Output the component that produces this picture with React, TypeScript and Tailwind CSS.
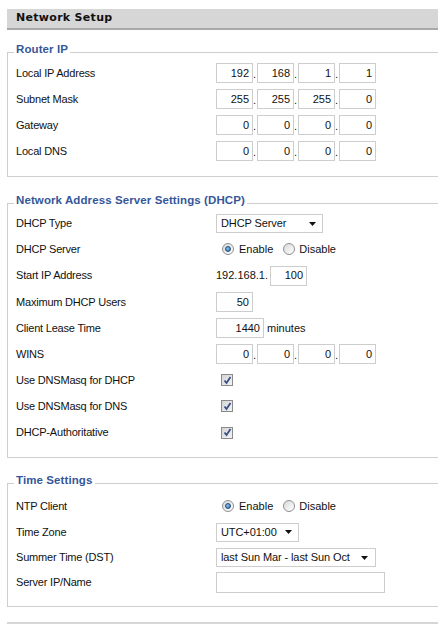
import React from "react";

const font = "font-['Liberation_Sans',Arial,sans-serif]";

function Header({ title }: { title: string }) {
  return (
    <div className="ml-[7px] flex h-[21px] items-center border-b-2 border-[#a9a9a9] bg-[#d6d6d6] pl-[9px]">
      <span className="font-['DejaVu_Sans',Verdana,sans-serif] text-[11px] font-bold tracking-[0.3px] text-[#111]">
        {title}
      </span>
    </div>
  );
}

function Fieldset({
  legend,
  children,
  className,
}: {
  legend: string;
  children: React.ReactNode;
  className?: string;
}) {
  return (
    <div className={`ml-[7px] border border-[#cfcfcf] ${className ?? ""}`}>
      <div className="-mt-[11px] ml-[6px] w-fit bg-white px-[2px] text-[11.5px] font-bold leading-[15px] tracking-[0.1px] text-[#35579a]">
        {legend}
      </div>
      {children}
    </div>
  );
}

function Row({
  label,
  children,
  h = "h-[26px]",
}: {
  label: string;
  children?: React.ReactNode;
  h?: string;
}) {
  return (
    <div className={`flex ${h} items-center`}>
      <div className="w-[208px] shrink-0 pl-[8px] text-[11px] tracking-[-0.2px] text-[#111]">{label}</div>
      <div className="flex items-center text-[11px] text-[#111]">{children}</div>
    </div>
  );
}

function Box({ value, w = "w-[37px]" }: { value: string; w?: string }) {
  return (
    <div
      className={`${w} flex h-[20px] items-center justify-end border border-[#cdcdcd] bg-white pr-[3px] text-[11px] text-[#111]`}
    >
      {value}
    </div>
  );
}

function IP({ parts }: { parts: string[] }) {
  return (
    <div className="flex items-center">
      {parts.map((p, i) => (
        <React.Fragment key={i}>
          <Box value={p} />
          {i < parts.length - 1 && (
            <span className="flex w-[4px] items-end justify-start self-end pb-[3px] text-[11px] leading-none">.</span>
          )}
        </React.Fragment>
      ))}
    </div>
  );
}

function Arrow() {
  return (
    <svg width="7" height="4" viewBox="0 0 7 4" className="shrink-0">
      <path d="M0 0 H7 L3.5 4 Z" fill="#111" />
    </svg>
  );
}

function Select({ value, w, pr }: { value: string; w: string; pr: string }) {
  return (
    <div
      className={`${w} flex h-[19px] items-center justify-between border border-[#cdcdcd] bg-white pl-[4px] ${pr} text-[11px] tracking-[-0.1px] text-[#111]`}
    >
      <span>{value}</span>
      <Arrow />
    </div>
  );
}

function Radio({ checked }: { checked?: boolean }) {
  return (
    <div className="flex h-[12px] w-[12px] items-center justify-center rounded-full border border-[#8f9091] bg-[linear-gradient(135deg,#d9d9d9,#ffffff)]">
      {checked && (
        <div className="h-[6px] w-[6px] rounded-full border border-[#1f4d7a] bg-[radial-gradient(circle_at_35%_35%,#8fc3ee,#2a6aa6)]" />
      )}
    </div>
  );
}

function EnableDisable() {
  return (
    <div className="flex items-center pl-[6px]">
      <Radio checked />
      <span className="ml-[5px]">Enable</span>
      <div className="ml-[10px]">
        <Radio />
      </div>
      <span className="ml-[4px]">Disable</span>
    </div>
  );
}

function Check() {
  return (
    <div className="ml-[5px] flex h-[12px] w-[12px] items-center justify-center border border-[#8a8a8a] bg-[linear-gradient(135deg,#d4d4d4,#f4f4f4)]">
      <svg width="9" height="9" viewBox="0 0 9 9">
        <path d="M1.5 4.5 L3.5 7 L7.5 1" stroke="#3a4f86" strokeWidth="1.8" fill="none" />
      </svg>
    </div>
  );
}

export default function App() {
  return (
    <div className={`h-[624px] w-[438px] overflow-hidden bg-white ${font}`}>
      <div className="w-[452px] pt-[9px]">
        <Header title="Network Setup" />

        <Fieldset legend="Router IP" className="mt-[22px] pb-[12px]">
          <div className="mt-[3px]">
            <Row label="Local IP Address">
              <IP parts={["192", "168", "1", "1"]} />
            </Row>
            <Row label="Subnet Mask">
              <IP parts={["255", "255", "255", "0"]} />
            </Row>
            <Row label="Gateway">
              <IP parts={["0", "0", "0", "0"]} />
            </Row>
            <Row label="Local DNS">
              <IP parts={["0", "0", "0", "0"]} />
            </Row>
          </div>
        </Fieldset>

        <Fieldset legend="Network Address Server Settings (DHCP)" className="mt-[26px] pb-[11px]">
          <div className="mt-[3px]">
            <Row label="DHCP Type" h="h-[25px]">
              <Select value="DHCP Server" w="w-[107px]" pr="pr-[6px]" />
            </Row>
            <Row label="DHCP Server">
              <EnableDisable />
            </Row>
            <Row label="Start IP Address" h="h-[27px]">
              <span>192.168.1.</span>
              <div className="ml-[2px]">
                <Box value="100" />
              </div>
            </Row>
            <Row label="Maximum DHCP Users">
              <Box value="50" />
            </Row>
            <Row label="Client Lease Time">
              <Box value="1440" w="w-[48px]" />
              <span className="ml-[3px]">minutes</span>
            </Row>
            <Row label="WINS">
              <IP parts={["0", "0", "0", "0"]} />
            </Row>
            <Row label="Use DNSMasq for DHCP">
              <Check />
            </Row>
            <Row label="Use DNSMasq for DNS">
              <Check />
            </Row>
            <Row label="DHCP-Authoritative" h="h-[27px]">
              <Check />
            </Row>
          </div>
        </Fieldset>

        <Fieldset legend="Time Settings" className="mt-[25px] pb-[11px]">
          <div className="mt-[5px]">
            <Row label="NTP Client">
              <EnableDisable />
            </Row>
            <Row label="Time Zone">
              <Select value="UTC+01:00" w="w-[83px]" pr="pr-[6px]" />
            </Row>
            <Row label="Summer Time (DST)" h="h-[25px]">
              <Select value="last Sun Mar - last Sun Oct" w="w-[160px]" pr="pr-[7px]" />
            </Row>
            <Row label="Server IP/Name" h="h-[25px]">
              <div className="h-[21px] w-[169px] border border-[#cdcdcd] bg-white" />
            </Row>
          </div>
        </Fieldset>

        <div className="mt-[15px]">
          <Header title="" />
        </div>
      </div>
    </div>
  );
}
